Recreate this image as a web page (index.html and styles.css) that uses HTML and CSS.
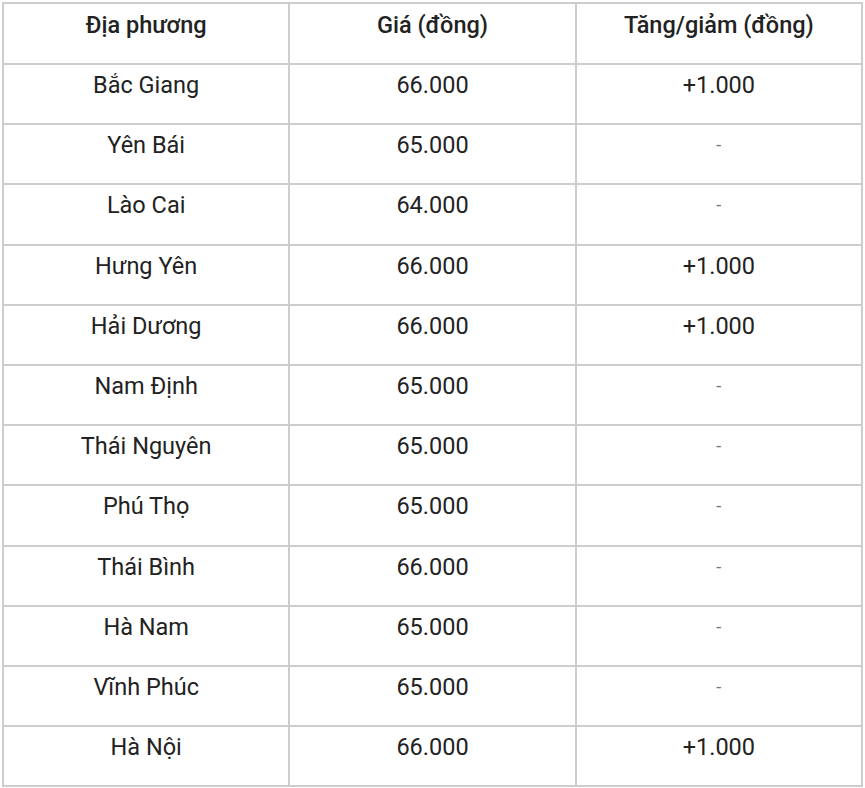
FILE: index.html
```html
<!DOCTYPE html>
<html lang="vi">
<head>
<meta charset="utf-8">
<title>Giá lợn hơi</title>
<link rel="stylesheet" href="styles.css">
</head>
<body>
<table class="price-table">
  <thead>
    <tr><th>Địa phương</th><th>Giá (đồng)</th><th>Tăng/giảm (đồng)</th></tr>
  </thead>
  <tbody>
    <tr><td>Bắc Giang</td><td>66.000</td><td>+1.000</td></tr>
    <tr><td>Yên Bái</td><td>65.000</td><td class="dash">-</td></tr>
    <tr><td>Lào Cai</td><td>64.000</td><td class="dash">-</td></tr>
    <tr><td>Hưng Yên</td><td>66.000</td><td>+1.000</td></tr>
    <tr><td>Hải Dương</td><td>66.000</td><td>+1.000</td></tr>
    <tr><td>Nam Định</td><td>65.000</td><td class="dash">-</td></tr>
    <tr><td>Thái Nguyên</td><td>65.000</td><td class="dash">-</td></tr>
    <tr><td>Phú Thọ</td><td>65.000</td><td class="dash">-</td></tr>
    <tr><td>Thái Bình</td><td>66.000</td><td class="dash">-</td></tr>
    <tr><td>Hà Nam</td><td>65.000</td><td class="dash">-</td></tr>
    <tr><td>Vĩnh Phúc</td><td>65.000</td><td class="dash">-</td></tr>
    <tr><td>Hà Nội</td><td>66.000</td><td>+1.000</td></tr>
  </tbody>
</table>
</body>
</html>
```

FILE: styles.css
```css
html, body {
  margin: 0;
  padding: 0;
  background: #ffffff;
}
body {
  padding: 2px 0 0 2px;
  font-family: Roboto, "Liberation Sans", Arial, sans-serif;
  color: #222222;
}
.price-table {
  width: 861px;
  border-collapse: collapse;
  table-layout: fixed;
}
.price-table th,
.price-table td {
  border: 2px solid #cdcdcd;
  height: 60.2px;
  padding: 0;
  text-align: center;
  vertical-align: top;
  box-sizing: border-box;
}
.price-table th {
  height: 61px;
  font-size: 23.5px;
  font-weight: 500;
  line-height: 28px;
  padding-top: 7px;
}
.price-table td {
  font-size: 23.5px;
  font-weight: 400;
  line-height: 28px;
  padding-top: 6px;
}
.price-table td.dash {
  color: #777777;
  font-size: 18px;
}
```
